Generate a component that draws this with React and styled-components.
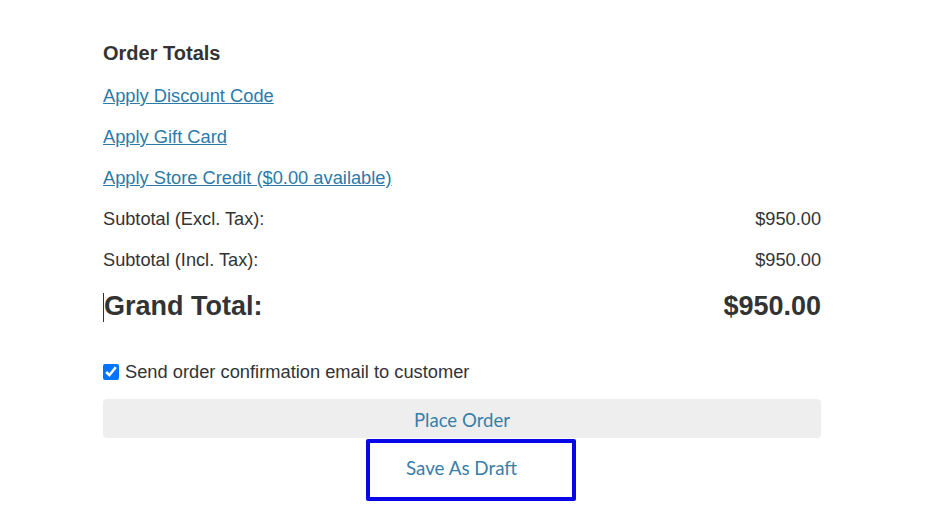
import styled, { createGlobalStyle } from "styled-components";

const GlobalStyle = createGlobalStyle`
  body {
    margin: 0;
    background: #fff;
    font-family: "Liberation Sans", Arial, sans-serif;
    color: #333;
  }
`;

const Panel = styled.div`
  width: 718px;
  padding: 33px 0 0 103px;
  display: flex;
  flex-direction: column;
`;

const Heading = styled.h3`
  margin: 0 0 1px;
  font-size: 20px;
  font-weight: 700;
  line-height: 41px;
  color: #333;
`;

const ActionLink = styled.a`
  display: block;
  width: fit-content;
  font-size: 18.3px;
  line-height: 41px;
  color: #2c7aa8;
  text-decoration: underline;
  cursor: pointer;

  &:last-of-type {
    margin-bottom: 1px;
  }
`;

const Row = styled.div`
  display: flex;
  justify-content: space-between;
  align-items: center;
  height: ${(p) => (p.$big ? "51px" : "41px")};
  font-size: ${(p) => (p.$big ? "27px" : "18.2px")};
  font-weight: ${(p) => (p.$big ? 700 : 400)};
  color: #333;
`;

const Caret = styled.span`
  display: inline-block;
  width: 1px;
  height: 29px;
  background: #333;
  vertical-align: middle;
`;

const CheckRow = styled.label`
  display: flex;
  align-items: center;
  gap: 6px;
  height: 41px;
  margin-top: 19px;
  font-size: 18.3px;
  color: #333;

  input {
    width: 16px;
    height: 16px;
    margin: 0;
    accent-color: #0075ff;
  }
`;

const PlaceButton = styled.button`
  height: 39px;
  margin-top: 7px;
  padding: 2px 0 0;
  border: none;
  border-radius: 4px;
  background: #eeeeee;
  font-family: Lato, "Open Sans", sans-serif;
  font-size: 18.6px;
  color: #3a7ea8;
  cursor: pointer;
`;

const DraftButton = styled.button`
  align-self: flex-start;
  width: 210px;
  height: 62px;
  margin: 1px 0 0 263px;
  padding: 0 0 6px 36px;
  text-align: left;
  border: 4px solid #0606e6;
  border-radius: 2px;
  background: #fff;
  font-family: Lato, "Open Sans", sans-serif;
  font-size: 18.8px;
  color: #3a7ea8;
  cursor: pointer;
`;

export default function App() {
  return (
    <>
      <GlobalStyle />
      <Panel>
        <Heading>Order Totals</Heading>
        <ActionLink>Apply Discount Code</ActionLink>
        <ActionLink>Apply Gift Card</ActionLink>
        <ActionLink>Apply Store Credit ($0.00 available)</ActionLink>
        <Row>
          <span>Subtotal (Excl. Tax):</span>
          <span>$950.00</span>
        </Row>
        <Row>
          <span>Subtotal (Incl. Tax):</span>
          <span>$950.00</span>
        </Row>
        <Row $big>
          <span>
            <Caret />
            Grand Total:
          </span>
          <span>$950.00</span>
        </Row>
        <CheckRow>
          <input type="checkbox" defaultChecked />
          Send order confirmation email to customer
        </CheckRow>
        <PlaceButton>Place Order</PlaceButton>
        <DraftButton>Save As Draft</DraftButton>
      </Panel>
    </>
  );
}
